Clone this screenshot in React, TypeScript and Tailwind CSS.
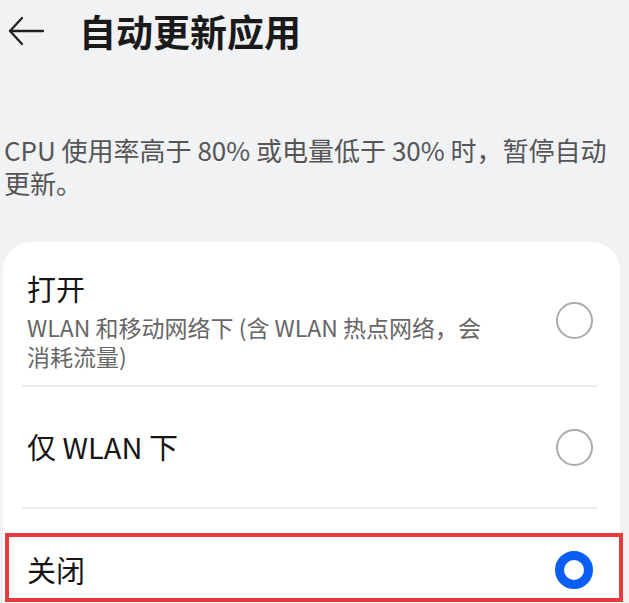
import React from 'react'

const font = "font-['Noto_Sans_CJK_SC','Noto_Sans',sans-serif]"

function Radio({ checked }: { checked?: boolean }) {
  if (checked) {
    return <div className="h-[38px] w-[38px] rounded-full border-[9px] border-[#0b5ef4] bg-white" />
  }
  return <div className="h-[37px] w-[37px] rounded-full border-2 border-[#ababab] bg-white" />
}

function Divider() {
  return <div className="mr-[23px] ml-[19px] h-[2px] bg-[#ececec]" />
}

export default function App() {
  return (
    <div className={`relative h-[603px] overflow-hidden bg-[#f1f2f4] ${font}`}>
      {/* top bar */}
      <div className="flex h-[62px] items-center pl-[7px]">
        <svg width="38" height="34" viewBox="0 0 38 34" fill="none" stroke="#222" strokeWidth="2.3" strokeLinecap="round" strokeLinejoin="round">
          <path d="M3 17 H36" />
          <path d="M15 4 L3 17 L15 30" />
        </svg>
        <h1 className="ml-[34px] text-[37px] leading-none font-bold text-[#1a1a1a]">自动更新应用</h1>
      </div>

      <p className="mt-[71px] pl-[4px] text-[26px] leading-[33px] text-[#555]">
        <span className="block whitespace-nowrap">CPU 使用率高于 80% 或电量低于 30% 时，暂停自动</span>
        <span className="block">更新。</span>
      </p>

      {/* options card */}
      <div className="mt-[43px] ml-[3px] w-[617px] rounded-t-[28px] bg-white">
        <div className="flex items-center pt-[28px] pr-[27px] pb-[14px] pl-[24px]">
          <div className="flex-1">
            <div className="text-[29px] leading-[37px] text-[#151515]">打开</div>
            <div className="mt-[6px] text-[23px] leading-[29px] text-[#666]">
              <span className="block whitespace-nowrap">WLAN 和移动网络下 (含 WLAN 热点网络，会</span>
              <span className="block">消耗流量)</span>
            </div>
          </div>
          <Radio />
        </div>
        <Divider />
        <div className="flex h-[120px] items-center pr-[27px] pl-[24px]">
          <div className="flex-1 text-[29px] text-[#151515]">仅 WLAN 下</div>
          <Radio />
        </div>
        <Divider />
        <div className="flex h-[122px] items-center pr-[27px] pl-[24px]">
          <div className="flex-1 text-[29px] text-[#151515]">关闭</div>
          <Radio checked />
        </div>
      </div>

      {/* highlight frame around the selected row */}
      <div className="absolute top-[533px] left-[5px] h-[69px] w-[618px] border-4 border-[#e8393d]" />
    </div>
  )
}
